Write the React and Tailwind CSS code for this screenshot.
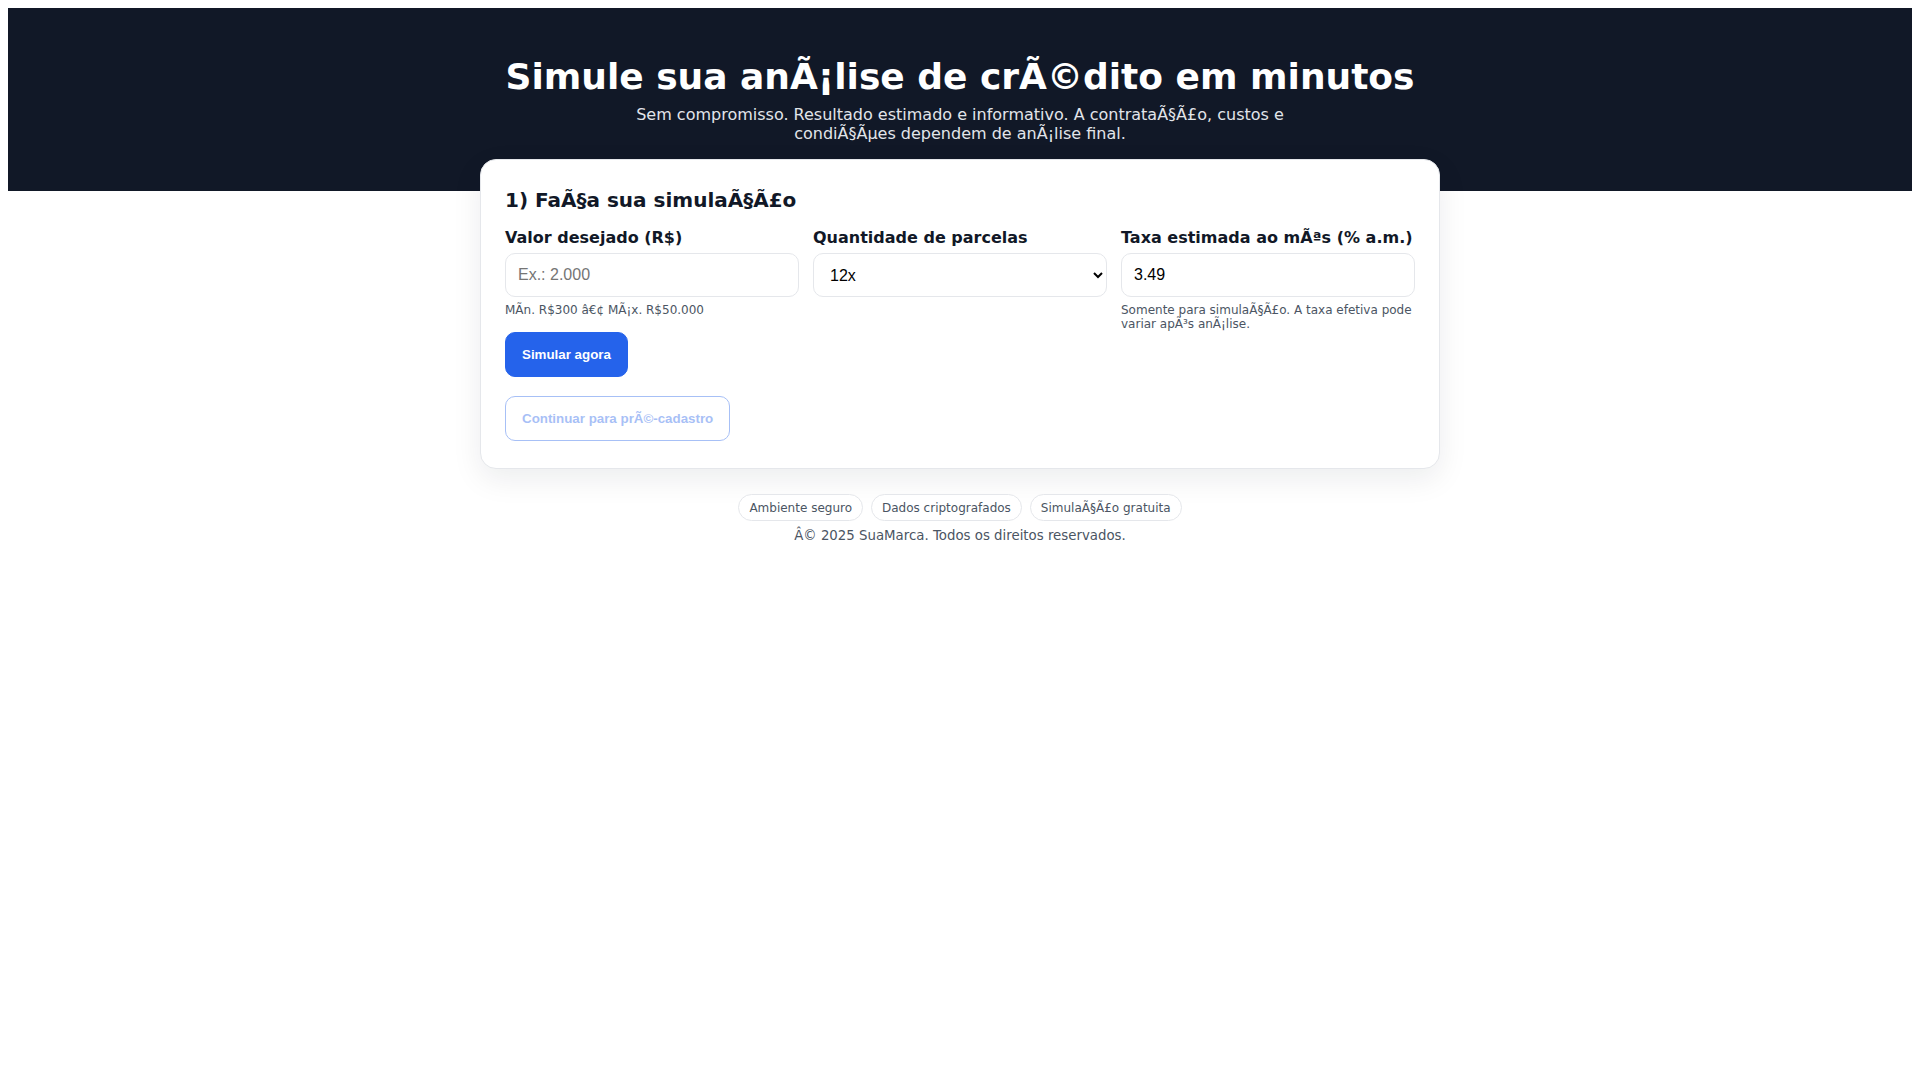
import React from 'react';

const sans = { fontFamily: '"DejaVu Sans", sans-serif' };

// Field wrapper: label + control + helper text
const Field = ({ label, children, hint }) => (
    <div className="flex flex-col">
        <label className="block text-[16px] leading-[19px] font-bold text-[#111827] mb-[6px]">{label}</label>
        {children}
        {hint && <p className="mt-[6px] text-[12px] leading-[14px] text-[#4b5563]">{hint}</p>}
    </div>
);

const inputCls =
    "h-[44px] w-full rounded-[10px] border border-[#e5e7eb] bg-white px-[12px] text-[16px] text-black placeholder:text-[#757575] outline-none font-['Liberation_Sans',Arial,sans-serif]";

export default function App() {
    return (
        <div className="min-h-screen bg-white p-2" style={sans}>
            <header className="bg-[#111827] pt-[47px] pb-[48px] text-center">
                <h1 className="text-[36px] leading-[43px] font-bold text-white mb-[7px]">
                    Simule sua anÃ¡lise de crÃ©dito em minutos
                </h1>
                <p className="mx-auto max-w-[680px] text-[16px] leading-[19px] text-[#e2e5ea]">
                    Sem compromisso. Resultado estimado e informativo. A contrataÃ§Ã£o, custos e condiÃ§Ãµes dependem de anÃ¡lise final.
                </p>
            </header>

            <main className="mx-auto -mt-[32px] w-[960px] rounded-[16px] border border-[#e5e7eb] bg-white px-6 pt-7 pb-[27px] shadow-[0_10px_30px_rgba(17,24,39,0.08)]">
                <h2 className="text-[20px] leading-[24px] font-bold text-[#111827] mb-[16px]">1) FaÃ§a sua simulaÃ§Ã£o</h2>

                <div className="grid grid-cols-3 gap-[14px] items-start">
                    <div className="flex flex-col">
                        <Field label="Valor desejado (R$)" hint="MÃn. R$300 â€¢ MÃ¡x. R$50.000">
                            <input className={inputCls} placeholder="Ex.: 2.000" />
                        </Field>
                        <button className="mt-[15px] self-start h-[45px] rounded-[10px] border border-[#2563eb] bg-[#2563eb] px-4 text-[13.333px] font-bold text-white font-['Liberation_Sans',Arial,sans-serif]">
                            Simular agora
                        </button>
                    </div>
                    <Field label="Quantidade de parcelas">
                        <select defaultValue="12" className="h-[44px] w-full rounded-[10px] border border-[#e5e7eb] bg-white pl-[12px] pr-[6px] text-[16px] text-black outline-none font-['Liberation_Sans',Arial,sans-serif]">
                            <option value="6">6x</option>
                            <option value="12">12x</option>
                            <option value="18">18x</option>
                            <option value="24">24x</option>
                        </select>
                    </Field>
                    <Field label="Taxa estimada ao mÃªs (% a.m.)" hint="Somente para simulaÃ§Ã£o. A taxa efetiva pode variar apÃ³s anÃ¡lise.">
                        <input className={inputCls} defaultValue="3.49" />
                    </Field>
                </div>

                <button disabled className="mt-[19px] h-[45px] rounded-[10px] border border-[#2563eb] bg-white px-4 text-[13.333px] font-bold text-[#2563eb] opacity-40 font-['Liberation_Sans',Arial,sans-serif]">
                    Continuar para prÃ©-cadastro
                </button>
            </main>

            <footer className="mt-[25px] flex flex-col items-center">
                <div className="flex gap-2">
                    {["Ambiente seguro", "Dados criptografados", "SimulaÃ§Ã£o gratuita"].map((t) => (
                        <span key={t} className="flex h-[27px] items-center rounded-full border border-[#e5e7eb] bg-white px-[10px] text-[12px] text-[#4b5563]">
                            {t}
                        </span>
                    ))}
                </div>
                <p className="mt-[7px] text-[13.333px] leading-[16px] text-[#4b5563]">Â© 2025 SuaMarca. Todos os direitos reservados.</p>
            </footer>
        </div>
    );
}
